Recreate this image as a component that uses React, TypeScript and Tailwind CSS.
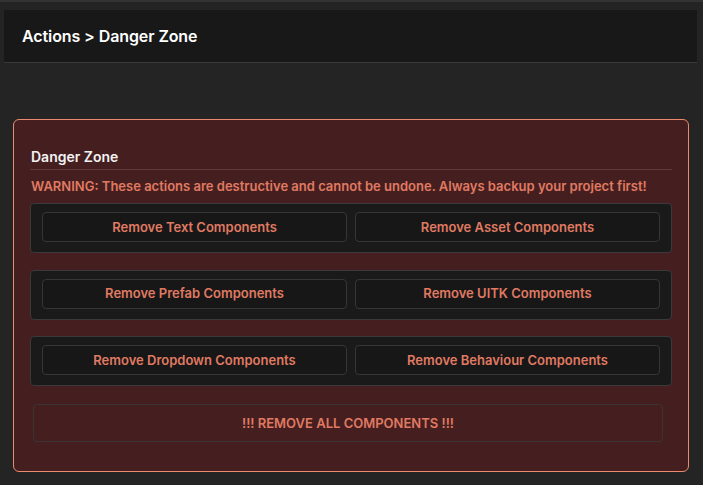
import React from 'react';

const groups: [string, string][] = [
  ['Remove Text Components', 'Remove Asset Components'],
  ['Remove Prefab Components', 'Remove UITK Components'],
  ['Remove Dropdown Components', 'Remove Behaviour Components'],
];

const App: React.FC = () => {
  return (
    <div
      className="w-[703px] h-[485px] bg-[#242424] border-t-2 border-[#333333] overflow-hidden"
      style={{ fontFamily: 'Inter, "Noto Sans", sans-serif' }}
    >
      {/* Breadcrumb header */}
      <div className="mt-2 ml-1 mr-[6px] h-[53px] bg-[#181818] border-b border-[#3a3a3a] flex items-center px-[18px]">
        <h1 className="text-[16px] font-semibold text-white tracking-[-0.1px]">Actions &gt; Danger Zone</h1>
      </div>

      {/* Danger card */}
      <div className="mt-[56px] ml-[13px] w-[676px] h-[353px] bg-[#451f20] border border-[#ec8a70] rounded-md pt-[27px] px-[16px]">
        <h2 className="pl-px text-[14px] leading-[20px] font-semibold text-[#f2f2f2]">Danger Zone</h2>
        <div className="mt-[2px] h-px bg-[#5e3a3b]" />
        <p className="mt-[7px] pl-px text-[13px] leading-[18px] font-semibold text-[#e07a62]">
          WARNING: These actions are destructive and cannot be undone. Always backup your project first!
        </p>

        <div className="mt-[8px] flex flex-col gap-[16.5px]">
          {groups.map(([a, b]) => (
            <div
              key={a}
              className="h-[50px] bg-[#1a1a1a] border border-[#3a3a3a] rounded-[4px] pl-[11px] pr-[11px] pt-[8px] flex gap-[8px]"
            >
              {[a, b].map(label => (
                <button
                  key={label}
                  className="flex-1 h-[30px] pt-px bg-[#171717] border border-[#363636] rounded-[4px] text-[13px] font-semibold text-[#e07a62]"
                >
                  {label}
                </button>
              ))}
            </div>
          ))}
        </div>

        <button className="mt-[18px] ml-[3px] w-[630px] h-[38px] pt-px border border-[#3c3334] rounded-[4px] text-[13px] font-semibold text-[#e07a62]">
          !!! REMOVE ALL COMPONENTS !!!
        </button>
      </div>
    </div>
  );
};

export default App;
